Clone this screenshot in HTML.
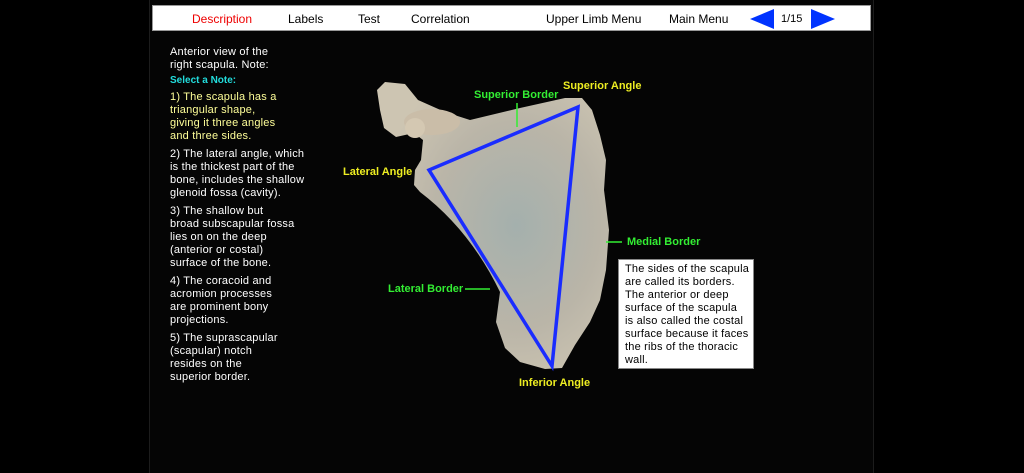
<!DOCTYPE html>
<html><head><style>
body{margin:0;background:#000;width:1024px;height:473px;overflow:hidden;font-family:"Liberation Sans",sans-serif;position:relative}
#frame{position:absolute;left:149px;top:0;width:725px;height:473px;background:#050505;border-left:1px solid #1c1c1c;border-right:1px solid #1c1c1c;box-sizing:border-box}
#nav{position:absolute;left:152px;top:5px;width:719px;height:26px;background:#fff;border:1px solid #999;box-sizing:border-box}
#nav span{position:absolute;top:6px;font-size:12px;color:#000}
.t{position:absolute;font-size:11px;line-height:13px;color:#fff;letter-spacing:0.2px;white-space:nowrap}
.y{color:#ffff99}
.lbl{position:absolute;font-size:11px;font-weight:bold;white-space:nowrap}
.g{color:#33ee33}.yl{color:#eeee22}
#box{position:absolute;left:618px;top:259px;width:136px;height:110px;background:#fff;border:1px solid #888;box-sizing:border-box;padding:3px 4px 3px 6px;font-size:11px;line-height:13px;color:#000;letter-spacing:0.2px;white-space:nowrap}
</style></head><body>
<div id="frame"></div>
<div id="nav">
<span style="left:39px;color:#e00">Description</span>
<span style="left:135px">Labels</span>
<span style="left:205px">Test</span>
<span style="left:258px">Correlation</span>
<span style="left:393px">Upper Limb Menu</span>
<span style="left:516px">Main Menu</span>
<svg style="position:absolute;left:596px;top:3px" width="120" height="20"><polygon points="1,10 25,0 25,20" fill="#0033ff"/><polygon points="62,0 86,10 62,20" fill="#0033ff"/></svg>
<span style="left:628px;font-size:11px;top:7px">1/15</span>
</div>
<div class="t" style="left:170px;top:46px">Anterior view of the<br>right scapula. Note:</div>
<div class="t" style="left:170px;top:74px;color:#22dddd;font-size:10px;font-weight:bold;letter-spacing:0">Select a Note:</div>
<div class="t y" style="left:170px;top:91px">1) The scapula has a<br>triangular shape,<br>giving it three angles<br>and three sides.</div>
<div class="t" style="left:170px;top:148px">2) The lateral angle, which<br>is the thickest part of the<br>bone, includes the shallow<br>glenoid fossa (cavity).</div>
<div class="t" style="left:170px;top:205px">3) The shallow but<br>broad subscapular fossa<br>lies on on the deep<br>(anterior or costal)<br>surface of the bone.</div>
<div class="t" style="left:170px;top:275px">4) The coracoid and<br>acromion processes<br>are prominent bony<br>projections.</div>
<div class="t" style="left:170px;top:332px">5) The suprascapular<br>(scapular) notch<br>resides on the<br>superior border.</div>
<svg style="position:absolute;left:0;top:0" width="1024" height="473">
<defs><radialGradient id="bg" cx="0.6" cy="0.5" r="0.6"><stop offset="0" stop-color="#a4b0ad"/><stop offset="0.6" stop-color="#bab5a8"/><stop offset="1" stop-color="#cdc5b2"/></radialGradient></defs>
<path fill="url(#bg)" d="M377,90 L385,82 L405,84 L418,100 L445,112 L470,120 L520,108 L565,98 L582,98 L592,110 L600,135 L606,160 L604,190 L609,230 L606,270 L600,300 L590,322 L575,345 L562,368 L545,369 L520,362 L505,348 L496,322 L500,292 Q470,230 420,192 L414,185 L415,170 L421,160 L423,140 L414,133 L396,137 L384,128 L380,110 Z"/>
<ellipse cx="432" cy="122" rx="28" ry="13" fill="#cabda8"/>
<ellipse cx="415" cy="128" rx="10" ry="10" fill="#d4c8b2"/>
<polygon points="578,107 429,170 552,366" fill="none" stroke="#1a2cff" stroke-width="3.5"/>
<g stroke="#33ee33" stroke-width="1.5"><line x1="517" y1="103" x2="517" y2="127"/><line x1="606" y1="242" x2="622" y2="242"/><line x1="465" y1="289" x2="490" y2="289"/></g>
</svg>
<div class="lbl g" style="left:474px;top:89px">Superior Border</div>
<div class="lbl yl" style="left:563px;top:80px">Superior Angle</div>
<div class="lbl yl" style="left:343px;top:166px">Lateral Angle</div>
<div class="lbl g" style="left:627px;top:236px">Medial Border</div>
<div class="lbl g" style="left:388px;top:283px">Lateral Border</div>
<div class="lbl yl" style="left:519px;top:377px">Inferior Angle</div>
<div id="box">The sides of the scapula<br>are called its borders.<br>The anterior or deep<br>surface of the scapula<br>is also called the costal<br>surface because it faces<br>the ribs of the thoracic<br>wall.</div>
</body></html>
